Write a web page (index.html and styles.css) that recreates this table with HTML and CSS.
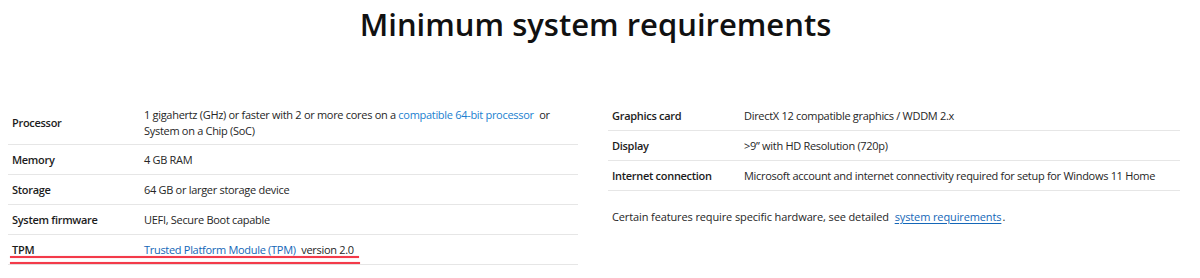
FILE: index.html
```html
<!DOCTYPE html>
<html lang="en">
<head>
<meta charset="utf-8">
<title>Minimum system requirements</title>
<link rel="stylesheet" href="styles.css">
</head>
<body>
<h1 class="title">Minimum system requirements</h1>
<div class="cols">
  <div class="col">
    <table class="spec">
      <tr class="tall"><th>Processor</th><td>1 gigahertz (GHz) or faster with 2 or more cores on a <a class="lnk gap" href="#">compatible 64-bit processor</a> or<br>System on a Chip (SoC)</td></tr>
      <tr><th>Memory</th><td>4 GB RAM</td></tr>
      <tr><th>Storage</th><td>64 GB or larger storage device</td></tr>
      <tr><th>System firmware</th><td>UEFI, Secure Boot capable</td></tr>
      <tr class="tpm"><th>TPM</th><td><a class="lnk ul dark gap" href="#">Trusted Platform Module (TPM)</a> version 2.0</td></tr>
    </table>
    <div class="mark mark1"></div>
    <div class="mark mark2"></div>
  </div>
  <div class="col">
    <table class="spec">
      <tr><th>Graphics card</th><td>DirectX 12 compatible graphics / WDDM 2.x</td></tr>
      <tr><th>Display</th><td>&gt;9” with HD Resolution (720p)</td></tr>
      <tr><th>Internet connection</th><td>Microsoft account and internet connectivity required for setup for Windows 11 Home</td></tr>
    </table>
    <p class="note">Certain features require specific hardware, see detailed <a class="lnk ul dark lead" href="#">system requirements</a>.</p>
  </div>
</div>
</body>
</html>
```
FILE: styles.css
```css
html, body {
  margin: 0;
  padding: 0;
  background: #ffffff;
}
body {
  font-family: "Open Sans", "Noto Sans", "Liberation Sans", sans-serif;
  color: #222222;
  width: 1200px;
  height: 278px;
  overflow: hidden;
}
.title {
  margin: 3px 0 0;
  padding-right: 9px;
  text-align: center;
  font-size: 31px;
  line-height: 42px;
  font-weight: 600;
  color: #111111;
}
.cols {
  display: grid;
  grid-template-columns: 570px 572px;
  column-gap: 30px;
  padding-left: 8px;
  margin-top: 56px;
}
.col {
  position: relative;
}
.spec {
  width: 100%;
  border-collapse: collapse;
  table-layout: fixed;
  font-size: 11px;
  letter-spacing: -0.3px;
}
.spec th,
.spec td {
  border-bottom: 1px solid #e6e6e6;
  height: 29px;
  padding: 0;
  vertical-align: middle;
  text-align: left;
  line-height: 16px;
  white-space: nowrap;
}
.spec th {
  width: 132px;
  padding-left: 4px;
  font-weight: 600;
  color: #1c1c1c;
}
.spec td {
  padding-left: 0;
  color: #262626;
}
.spec tr.tall th,
.spec tr.tall td {
  height: 43px;
}
.lnk {
  color: #1a7fd0;
  text-decoration: none;
}
.lnk.dark {
  color: #1467b8;
}
.lnk.ul {
  text-decoration: underline;
  text-underline-offset: 2px;
}
.lnk.gap {
  margin-right: 3px;
}
.lnk.lead {
  margin-left: 3px;
  margin-right: 1px;
}
.note {
  margin: 18px 0 0 4px;
  font-size: 11px;
  letter-spacing: -0.12px;
  line-height: 15px;
  color: #262626;
}
.mark {
  position: absolute;
  left: 2px;
  height: 2px;
  background: #f33a4a;
  box-shadow: 0 0 1px rgba(243, 58, 74, 0.6);
}
.mark1 {
  top: 155px;
  width: 349px;
}
.mark2 {
  top: 161px;
  width: 350px;
}
```
